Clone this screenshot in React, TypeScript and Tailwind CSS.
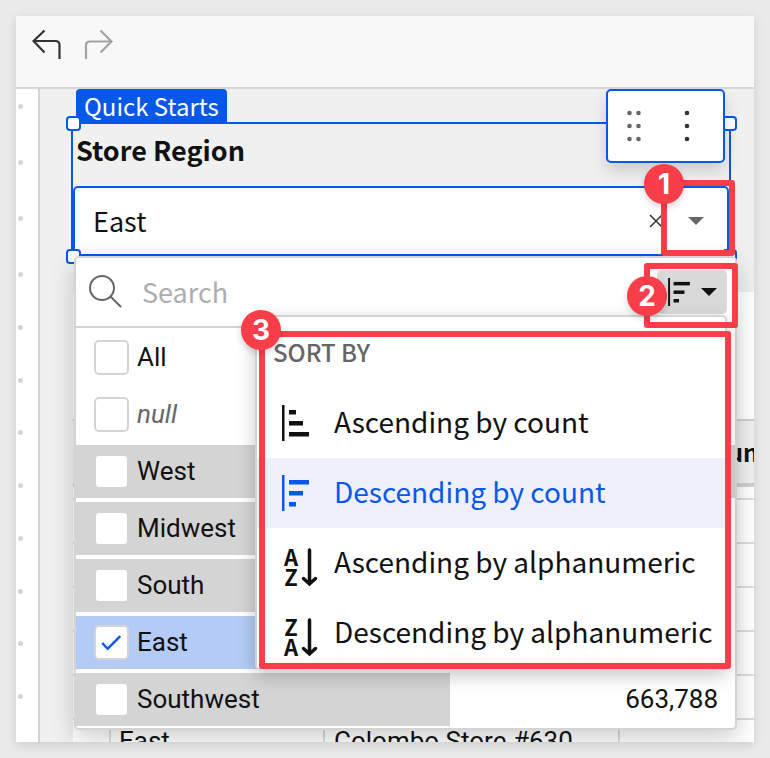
import type { ReactNode } from "react";

const sans = "font-['Noto_Sans_CJK_JP','Noto_Sans_CJK_SC',sans-serif]";
const roboto = "font-[Roboto,sans-serif]";

function UndoIcon() {
  return (
    <svg width="30" height="32" viewBox="0 0 30 32" fill="none" stroke="currentColor" strokeWidth="2.2">
      <path d="M12.500 1.500 1.500 12 12.500 23.500M1.500 12H23.500Q27.500 12 27.500 16V30" />
    </svg>
  );
}

function RedoIcon() {
  return (
    <svg width="30" height="32" viewBox="0 0 30 32" fill="none" stroke="currentColor" strokeWidth="2.2">
      <path d="M16.500 1.500 27.500 12.500 16.500 23.500M27.500 12.500H6Q2 12.500 2 16.500V30" />
    </svg>
  );
}

function Caret() {
  return (
    <svg width="16" height="8" viewBox="0 0 16 8" fill="currentColor">
      <path d="M0 0H16L8 8Z" />
    </svg>
  );
}

function BarsIcon({ widths, small = false }: { widths: number[]; small?: boolean }) {
  return (
    <svg width={small ? 22 : 28} height={small ? 28 : 36} viewBox="0 0 28 36" fill="currentColor">
      <rect x="0" y="0" width="2.500" height="36" />
      {widths.map((w, i) => (
        <rect key={i} x="7" y={5 + i * 11} width={w} height="4.500" />
      ))}
    </svg>
  );
}

function LetterSortIcon({ top, bottom }: { top: string; bottom: string }) {
  return (
    <svg width="36" height="52" viewBox="0 0 36 52" className={`overflow-visible ${sans}`}>
      <text x="9" y="29" fontSize="22" fontWeight="700" textAnchor="middle" fill="#111">{top}</text>
      <text x="9" y="49" fontSize="22" fontWeight="700" textAnchor="middle" fill="#111">{bottom}</text>
      <path d="M27.500 13V47M21.500 41.500 27.500 47 33.500 41.500" fill="none" stroke="#111" strokeWidth="3.500" strokeLinecap="round" />
    </svg>
  );
}

function Badge({ n, className }: { n: number; className: string }) {
  return (
    <span
      className={`absolute flex size-10 items-center justify-center rounded-full bg-[#f93d49] font-[Inter,sans-serif] text-[28px] leading-none font-bold text-white shadow-[0_3px_6px_rgba(0,0,0,0.18)] ${className}`}
    >
      {n}
    </span>
  );
}

function Handle({ className }: { className: string }) {
  return <span className={`absolute size-[15px] rounded-[4px] border-2 border-[#0659e8] bg-white ${className}`} />;
}

type Value = { id: string; label: string; italic?: boolean; checked?: boolean; share?: number; count?: string };

const values: Value[] = [
  { id: "all", label: "All" },
  { id: "null", label: "null", italic: true },
  { id: "west", label: "West", share: 100 },
  { id: "midwest", label: "Midwest", share: 90 },
  { id: "south", label: "South", share: 82 },
  { id: "east", label: "East", share: 70, checked: true },
  { id: "southwest", label: "Southwest", share: 56.8, count: "663,788" },
];

function ValueRow({ v }: { v: Value }) {
  return (
    <li className="relative flex h-[53px] items-center pr-[17px] pl-[18px]">
      {v.share !== undefined && (
        <span
          className={`absolute inset-y-0 left-0 ${v.checked ? "bg-[#b3cbf5]" : "bg-[#d4d4d4]"}`}
          style={{ width: `${v.share}%` }}
        />
      )}
      <span className="relative flex size-[35px] shrink-0">
        <input
          id={v.id}
          type="checkbox"
          defaultChecked={v.checked}
          className="peer size-full appearance-none rounded-[5px] border-2 border-[#d4d4d4] bg-white"
        />
        <svg
          className="pointer-events-none absolute inset-0 hidden text-[#0659e8] peer-checked:block"
          width="34"
          height="34"
          viewBox="0 0 35 35"
          fill="none"
          stroke="currentColor"
          strokeWidth="2.500"
        >
          <path d="M8.500 18.500 14 24.500 27 11.500" />
        </svg>
      </span>
      <label
        htmlFor={v.id}
        className={`relative ml-[8px] flex-1 pb-[2px] text-[26px] leading-8 ${v.italic ? "text-[#666] italic" : "text-[#111]"}`}
      >
        {v.label}
      </label>
      {v.count && <span className="relative pb-[2px] text-[26px] leading-8 text-[#111]">{v.count}</span>}
    </li>
  );
}

function SortItem({ icon, label, active = false }: { icon: ReactNode; label: string; active?: boolean }) {
  return (
    <button
      type="button"
      role="menuitemradio"
      aria-checked={active}
      className={`flex h-[70px] w-full items-center pl-[25px] text-left text-[28px] leading-10 whitespace-nowrap ${active ? "bg-[#f0f0fc] text-[#0659e8]" : "text-[#111]"}`}
    >
      <span className="flex w-[52px] shrink-0">{icon}</span>
      <span className="pb-[4px]">{label}</span>
    </button>
  );
}

function SortMenu() {
  return (
    <div
      role="menu"
      aria-label="Sort by"
      className="absolute top-[57px] right-[8px] w-[472px] rounded-[5px] border-2 border-[#d4d4d4] bg-white shadow-[0_6px_18px_rgba(0,0,0,0.22)]"
    >
      <h2 className="flex h-[71px] items-center pb-[2px] pl-4 text-[24px] leading-8 font-medium text-[#666]">SORT BY</h2>
      <SortItem icon={<BarsIcon widths={[7, 14, 20]} />} label="Ascending by count" />
      <SortItem icon={<BarsIcon widths={[20, 14, 7]} />} label="Descending by count" active />
      <SortItem icon={<LetterSortIcon top="A" bottom="Z" />} label="Ascending by alphanumeric" />
      <SortItem icon={<LetterSortIcon top="Z" bottom="A" />} label="Descending by alphanumeric" />
      <span className="pointer-events-none absolute top-[14px] -right-[6px] bottom-[-1px] left-[2px] rounded-[3px] border-[6px] border-[#f93d49]" />
      <Badge n={3} className="top-[-7px] left-[-16px]" />
    </div>
  );
}

function Dropdown() {
  return (
    <div className="absolute top-full right-[-8px] left-[1px] rounded-[5px] border-2 border-[#d4d4d4] bg-white shadow-[0_8px_24px_rgba(0,0,0,0.2)]">
      <div className="flex h-[70px] items-center border-b-2 border-[#d4d4d4] pr-[8px] pl-[13px]">
        <svg width="34" height="34" viewBox="0 0 34 34" fill="none" stroke="#666" strokeWidth="2" className="shrink-0">
          <circle cx="13" cy="13" r="12" />
          <path d="M21.500 21.500 32 32" />
        </svg>
        <input
          type="text"
          aria-label="Search"
          placeholder="Search"
          className="ml-[19px] h-10 min-w-0 flex-1 bg-transparent text-[27px] leading-10 outline-none placeholder:text-[#adadad]"
        />
        <button
          type="button"
          aria-label="Sort values"
          className="flex h-11 w-[70px] shrink-0 items-center justify-between rounded-[5px] bg-[#d9d9d9] pr-[10px] pl-[11px] text-[#111]"
        >
          <BarsIcon widths={[21, 14, 7]} small />
          <Caret />
        </button>
      </div>
      <ul className={`flex flex-col gap-1 pt-[3px] pb-[2px] ${roboto}`}>
        {values.map((v) => (
          <ValueRow key={v.id} v={v} />
        ))}
      </ul>
      <SortMenu />
      <span className="pointer-events-none absolute top-[5px] right-[-3px] h-[65px] w-[94px] rounded-[3px] border-[6px] border-[#f93d49]" />
      <Badge n={2} className="top-[18px] right-[68px]" />
    </div>
  );
}

function DragDots() {
  return (
    <svg width="18" height="34" viewBox="0 0 18 34" fill="#666">
      {[4, 17, 30].map((y) => (
        <g key={y}>
          <circle cx="4.500" cy={y} r="2.300" />
          <circle cx="13.500" cy={y} r="2.300" />
        </g>
      ))}
    </svg>
  );
}

function MoreDots() {
  return (
    <svg width="6" height="34" viewBox="0 0 6 34" fill="#333">
      {[4, 17, 30].map((y) => (
        <circle key={y} cx="3" cy={y} r="2.300" />
      ))}
    </svg>
  );
}

function RegionControl() {
  return (
    <section className="relative mr-[23px] ml-[31px] border-2 border-[#0659e8]">
      <label htmlFor="region" className="flex h-[62px] items-center pb-[10px] pl-[3px] text-[27px] leading-9 font-bold text-[#111]">
        Store Region
      </label>
      <div className="relative flex h-[70px] items-center rounded-[5px] border-2 border-[#0659e8] bg-white pr-[23px]">
        <select id="region" className="h-full flex-1 appearance-none bg-transparent pl-[18px] text-[27px] leading-10 text-[#111] outline-none">
          <option>East</option>
        </select>
        <button type="button" aria-label="Clear" className="mr-[25px] text-[#333]">
          <svg width="14" height="14" viewBox="0 0 14 14" fill="none" stroke="currentColor" strokeWidth="1.500">
            <path d="M1 1 13 13M13 1 1 13" />
          </svg>
        </button>
        <span className="text-[#666]">
          <Caret />
        </span>
      </div>
      <Handle className="top-[-8px] left-[-7px]" />
      <Handle className="top-[-8px] right-[-8px]" />
      <Handle className="bottom-[-8px] left-[-7px]" />
      <Handle className="right-[-8px] bottom-[-8px]" />
      <div className="absolute top-[-35px] right-[4px] flex h-[74px] w-[119px] items-center gap-[41px] rounded-[5px] border-2 border-[#0659e8] bg-white pl-[17px] shadow-[0_8px_16px_rgba(0,0,0,0.15)]">
        <button type="button" aria-label="Drag">
          <DragDots />
        </button>
        <button type="button" aria-label="More">
          <MoreDots />
        </button>
      </div>
      <Dropdown />
      <span className="pointer-events-none absolute right-[-6px] bottom-0 h-[76px] w-[74px] rounded-[3px] border-[6px] border-[#f93d49]" />
      <Badge n={1} className="right-[45px] bottom-[52px]" />
    </section>
  );
}

const cell = "border-r-2 border-b-2 border-[#dcdcdc]";
const headCell = "border-t-2 border-b-4 border-[#d0d0d0]";

function StoreTable() {
  return (
    <div className={`mt-[34px] ml-[33px] bg-white pt-[127px] ${roboto}`}>
      <table className="w-full table-fixed border-separate border-spacing-0 text-left text-[26px] leading-8 text-[#111]">
        <thead>
          <tr className={`h-[68px] bg-[#f0f0f0] text-[24px] ${sans}`}>
            <th className={`${headCell} w-[38px] p-0`} />
            <th className={`${headCell} w-[214px] p-0`} />
            <th className={`${headCell} w-[295px] p-0`} />
            <th className={`${headCell} py-0 pr-0 pl-[77px] font-bold`}>Count</th>
          </tr>
        </thead>
        <tbody>
          <tr className="h-[13px]">
            <td className={`${cell} p-0`} />
            <td className={`${cell} p-0`} />
            <td className={`${cell} p-0`} />
            <td className="border-b-2 border-[#dcdcdc] p-0" />
          </tr>
          {[0, 1, 2, 3, 4].map((r) => (
            <tr key={r} className="h-11">
              <td className={`${cell} p-0`} />
              <td className={`${cell} p-0`} />
              <td className={`${cell} p-0`} />
              <td className="border-b-2 border-[#dcdcdc] p-0" />
            </tr>
          ))}
          <tr className="h-11">
            <td className={`${cell} p-0`} />
            <td className={`${cell} py-0 pr-0 pl-2`}>East</td>
            <td className={`${cell} py-0 pr-0 pl-[9px]`}>Colombo Store #630</td>
            <td className="border-b-2 border-[#dcdcdc] p-0" />
          </tr>
        </tbody>
      </table>
    </div>
  );
}

function Dot() {
  return <span className="size-[5px] rounded-full bg-[#d4d4d4]" />;
}

function Ruler() {
  return (
    <div className="flex w-6 shrink-0 flex-col gap-[48px] border-r-2 border-[#d4d4d4] bg-white pt-[15px] pl-[2px]">
      <div className="flex flex-col gap-[51px]">
        <Dot />
        <Dot />
        <Dot />
        <Dot />
      </div>
      <div className="flex h-[374px] flex-col justify-between">
        {[0, 1, 2, 3, 4, 5, 6, 7].map((i) => (
          <Dot key={i} />
        ))}
      </div>
    </div>
  );
}

export default function App() {
  return (
    <div className={`flex h-screen bg-[#eaeaea] p-4 ${sans}`}>
      <main className="flex min-w-0 flex-1 flex-col overflow-hidden bg-[#f0f0f0] shadow-[0_3px_10px_rgba(0,0,0,0.13)]">
        <header className="flex h-[73px] shrink-0 items-start gap-[22px] border-b-2 border-[#d8d8d8] bg-[#f8f8f8] pt-[13px] pl-4">
          <button type="button" aria-label="Undo" className="text-[#333]">
            <UndoIcon />
          </button>
          <button type="button" aria-label="Redo" className="text-[#a3a3a3]">
            <RedoIcon />
          </button>
        </header>
        <div className="flex min-h-0 flex-1">
          <Ruler />
          <div className="min-w-0 flex-1 overflow-hidden">
            <div className="ml-[36px] flex h-[33px] w-fit items-center rounded-t-[4px] bg-[#0659e8] px-[8px] text-[24px] leading-8 text-white">
              Quick Starts
            </div>
            <RegionControl />
            <StoreTable />
          </div>
        </div>
      </main>
    </div>
  );
}
